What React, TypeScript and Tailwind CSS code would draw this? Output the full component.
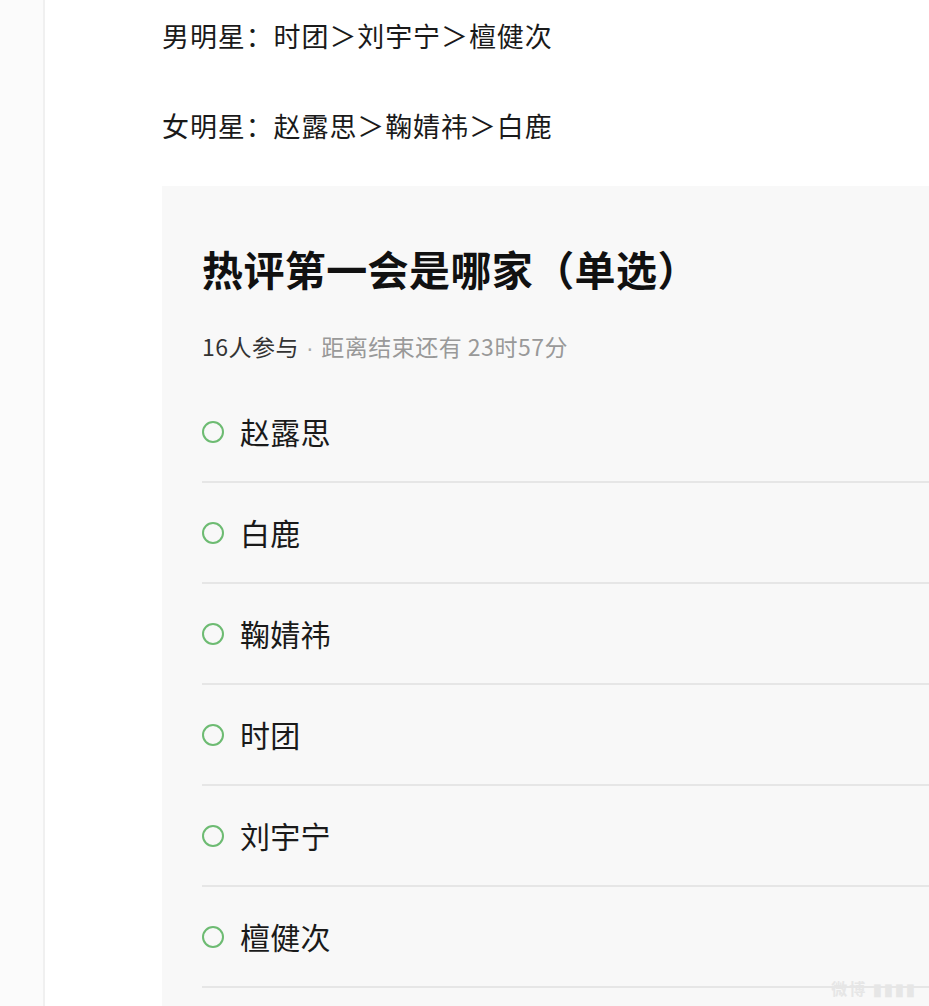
import React from "react";

const font = { fontFamily: '"Noto Sans CJK SC", "Noto Sans", sans-serif' };

const options = ["赵露思", "白鹿", "鞠婧祎", "时团", "刘宇宁", "檀健次"];

export default function App() {
  return (
    <div className="relative flex min-h-screen bg-white overflow-hidden" style={font}>
      <div className="w-[45px] shrink-0 bg-[#fbfbfb] border-r-2 border-[#f0f0f0]" />
      <div className="flex-1 pl-[115px]">
        <p className="mt-[16px] pl-[2px] text-[27px] leading-[40px] tracking-[0.9px] text-[#1a1a1a] whitespace-nowrap">
          男明星：时团＞刘宇宁＞檀健次
        </p>
        <p className="mt-[50px] pl-[2px] text-[27px] leading-[40px] tracking-[0.9px] text-[#1a1a1a] whitespace-nowrap">
          女明星：赵露思＞鞠婧祎＞白鹿
        </p>
        <div className="mt-[40px] ml-[2px] bg-[#f8f8f8] pl-[40px] pt-[56px] pb-[20px]">
          <h1 className="text-[41px] leading-[52px] tracking-[0.4px] font-bold text-[#111] whitespace-nowrap">
            热评第一会是哪家（单选）
          </h1>
          <div className="mt-[37px] text-[23px] leading-[30px] tracking-[0.5px] whitespace-nowrap">
            <span className="text-[#333]">16人参与</span>
            <span
              className="text-[#aaa] px-[7px]"
              style={{ fontFamily: '"Liberation Sans", sans-serif' }}
            >
              ·
            </span>
            <span className="text-[#999]">距离结束还有 23时57分</span>
          </div>
          <ul className="mt-[19px]">
            {options.map((o) => (
              <li
                key={o}
                className="flex items-center h-[101px] border-b-2 border-[#e6e6e6]"
              >
                <span className="w-[22px] h-[22px] rounded-full border-2 border-[#6dbb72] mr-[16px] shrink-0" />
                <span className="text-[30px] tracking-[0.3px] text-[#1a1a1a]">{o}</span>
              </li>
            ))}
          </ul>
        </div>
      </div>
      <div className="absolute right-[12px] bottom-[8px] text-[16px] text-[#e6e6e6] font-bold tracking-[2px]">
        微博 ▮▮▮▮
      </div>
    </div>
  );
}
